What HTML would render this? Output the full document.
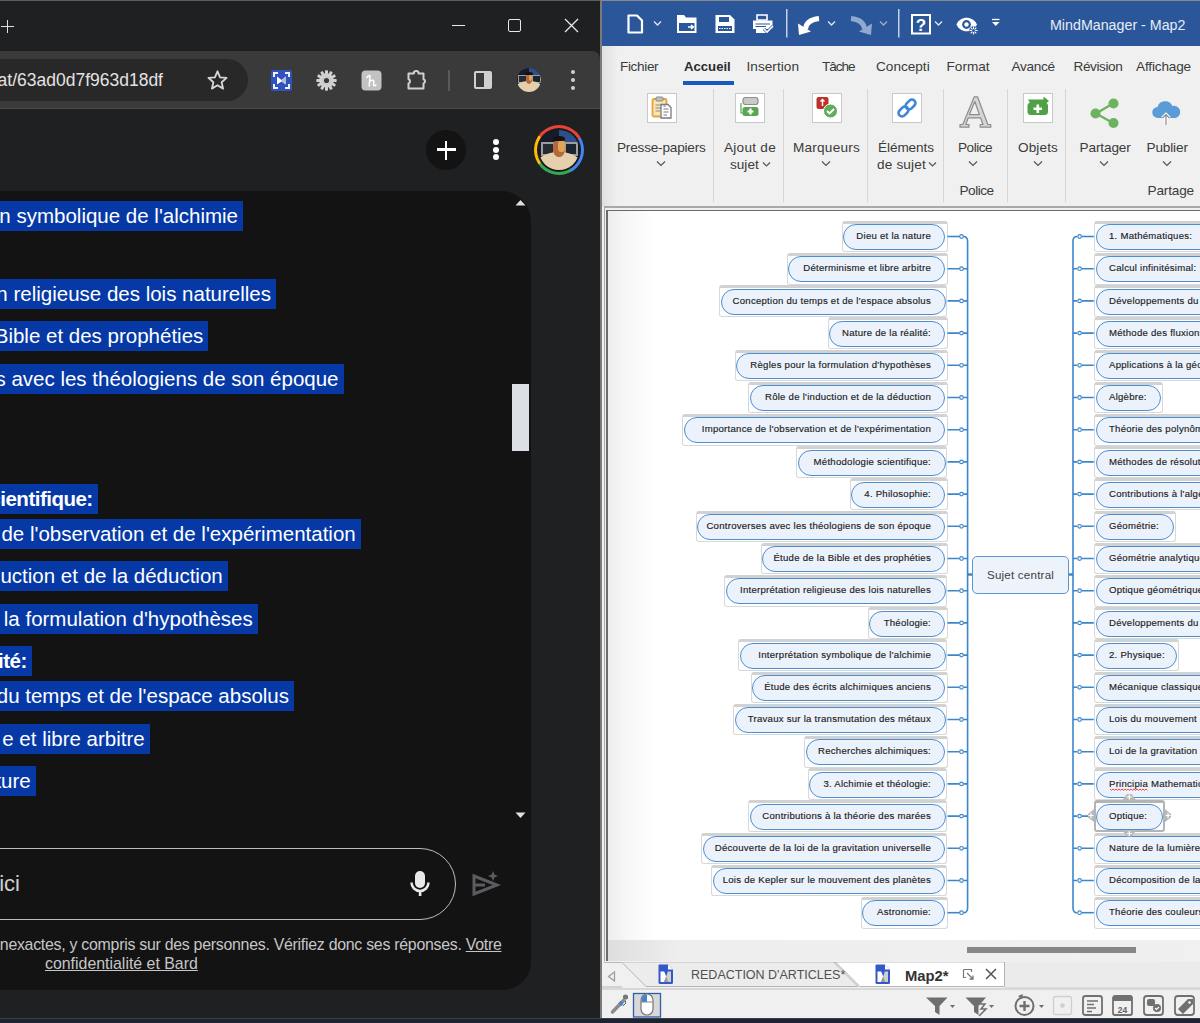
<!DOCTYPE html>
<html><head><meta charset="utf-8">
<style>
*{margin:0;padding:0;box-sizing:border-box}
html,body{width:1200px;height:1023px;overflow:hidden;background:#1c2130;font-family:"Liberation Sans",sans-serif}
.abs{position:absolute}
#chrome{position:absolute;left:0;top:0;width:600px;height:1019px;background:#1f2022;overflow:hidden}
#ctitle{position:absolute;left:0;top:0;width:600px;height:51px;background:#1f2022;border-top:1px solid #5a5b5e}
#ctool{position:absolute;left:0;top:51px;width:600px;height:58px;background:#3a3a3b;border-bottom:1px solid #4a4a4c;border-top-right-radius:8px}
#omni{position:absolute;left:-40px;top:8px;width:288px;height:42px;background:#282828;border-radius:21px}
#url{position:absolute;right:437px;top:19px;font-size:17.5px;color:#e3e3e3;white-space:nowrap;line-height:20px}
#content{position:absolute;left:0;top:110px;width:600px;height:909px;background:#1f2022}
#card{position:absolute;left:-30px;top:191px;width:561px;height:799px;background:#131314;border-radius:0 30px 28px 0;overflow:hidden}
.hl{position:absolute;height:30px;line-height:30px;background:#0639a6;color:#fff;font-size:20.5px;white-space:nowrap;padding-right:5px}
.hl.b{font-weight:bold;letter-spacing:-0.5px}
#mm{position:absolute;left:600px;top:0;width:600px;height:1019px;background:#f0f0f0;border-left:2px solid #7a7a7a;border-top:1px solid #8a8a8a;overflow:hidden}
#mtitle{position:absolute;left:0;top:0;width:600px;height:45px;background:#2b579a}
#ribbon{position:absolute;left:0;top:45px;width:600px;height:161px;background:#f0f0f0}
.tab{position:absolute;top:14px;font-size:14px;color:#3b3b3b;white-space:nowrap}
.rl{position:absolute;font-size:14px;color:#3b3b3b;white-space:nowrap;line-height:16px;text-align:center}
.sep{position:absolute;top:43px;width:1px;height:113px;background:#d5d5d5}
.ibox{position:absolute;top:48px;width:30px;height:30px;background:#fff;border:1px solid #c8c8c8}
.chev{position:absolute;width:8px;height:5px}
#canvas{position:absolute;left:6px;top:209px;width:600px;height:751px;background:#fff;border-left:2px solid #6a6a6a;border-top:2px solid #6a6a6a}
.gb{position:absolute;height:31.5px;border:1.8px solid #d8d8d8;border-top:3px solid #d2d2d2;border-radius:3px;background:#fff}
.gb.sel{border:2.2px solid #b4b4b4;border-top:3px solid #b4b4b4}
.pill{position:absolute;height:26px;border:1px solid #4b8fd3;border-radius:13px;background:#ebf2fb;font-size:9.6px;letter-spacing:0.25px;color:#1c1c1c;-webkit-text-stroke:0.15px #1c1c1c;line-height:22px;white-space:nowrap;overflow:hidden}
.tl{position:absolute;right:13.5px;top:0}
.tr{position:absolute;left:12.5px;top:0}
#mapsvg{position:absolute;left:0;top:0}
#mapsvg > path{fill:none;stroke:#3c86ca;stroke-width:1.6}
#mapsvg > circle{fill:#fff;stroke:#3c86ca;stroke-width:1.2}
</style></head><body>

<div id="chrome">
  <div id="ctitle">
    <div class="abs" style="left:1px;top:19px;width:13px;height:13px">
      <div class="abs" style="left:0;top:5.7px;width:13px;height:1.7px;background:#e0e0e0"></div>
      <div class="abs" style="left:5.7px;top:0;width:1.7px;height:13px;background:#e0e0e0"></div>
    </div>
    <div class="abs" style="left:452px;top:24px;width:13px;height:1.2px;background:#e8e8e8"></div>
    <div class="abs" style="left:508px;top:18px;width:13px;height:13px;border:1.2px solid #e8e8e8;border-radius:2px"></div>
    <svg class="abs" style="left:564px;top:17px" width="15" height="15"><path d="M1 1 L14 14 M14 1 L1 14" stroke="#e8e8e8" stroke-width="1.3"/></svg>
  </div>
  <div id="ctool">
    <div id="omni"></div>
    <div id="url">at/63ad0d7f963d18df</div>
    <svg class="abs" style="left:206px;top:18px" width="23" height="22" viewBox="0 0 24 24"><path d="M12 2.5l2.8 6.6 7.1.6-5.4 4.7 1.6 7-6.1-3.7-6.1 3.7 1.6-7L2.1 9.7l7.1-.6z" fill="none" stroke="#d6d6d6" stroke-width="2" stroke-linejoin="round"/></svg>
    <!-- ext icons -->
    <svg class="abs" style="left:271px;top:19px" width="21" height="21" viewBox="0 0 21 21"><rect width="21" height="21" rx="2" fill="#2f52bf"/><path d="M3 7V3H7M14 3H18V7M18 14V18H14M7 18H3V14" fill="none" stroke="#f0f2fa" stroke-width="2"/><path d="M6 6.5 L10.5 10 L15 6.5 V14.5 L10.5 11.5 L6 14.5Z" fill="#fff"/><path d="M10.5 10 L15 6.5 V14.5 L10.5 11.5Z" fill="#b8bccc"/></svg>
    <svg class="abs" style="left:316px;top:19px" width="21" height="21" viewBox="0 0 21 21"><g fill="#d2d2d2"><rect x="9" y="0.3" width="3" height="4" rx="0.8" transform="rotate(0 10.5 10.5)"/><rect x="9" y="0.3" width="3" height="4" rx="0.8" transform="rotate(30 10.5 10.5)"/><rect x="9" y="0.3" width="3" height="4" rx="0.8" transform="rotate(60 10.5 10.5)"/><rect x="9" y="0.3" width="3" height="4" rx="0.8" transform="rotate(90 10.5 10.5)"/><rect x="9" y="0.3" width="3" height="4" rx="0.8" transform="rotate(120 10.5 10.5)"/><rect x="9" y="0.3" width="3" height="4" rx="0.8" transform="rotate(150 10.5 10.5)"/><rect x="9" y="0.3" width="3" height="4" rx="0.8" transform="rotate(180 10.5 10.5)"/><rect x="9" y="0.3" width="3" height="4" rx="0.8" transform="rotate(210 10.5 10.5)"/><rect x="9" y="0.3" width="3" height="4" rx="0.8" transform="rotate(240 10.5 10.5)"/><rect x="9" y="0.3" width="3" height="4" rx="0.8" transform="rotate(270 10.5 10.5)"/><rect x="9" y="0.3" width="3" height="4" rx="0.8" transform="rotate(300 10.5 10.5)"/><rect x="9" y="0.3" width="3" height="4" rx="0.8" transform="rotate(330 10.5 10.5)"/><circle cx="10.5" cy="10.5" r="7.2"/></g><circle cx="10.5" cy="10.5" r="2.6" fill="#3a3a3a"/><circle cx="10.5" cy="10.5" r="4" fill="none" stroke="#c8c8c8" stroke-width="1"/></svg>
    <svg class="abs" style="left:361px;top:19px" width="21" height="21" viewBox="0 0 21 21"><rect x="0.5" y="0.5" width="20" height="20" rx="4" fill="#c2c2c2"/><path d="M6 7.5 C7 5.5 9 5 9 6.5 L8.2 16 M8.4 12.5 C9.5 10 12.5 9.5 12.8 11.5 C13 13 12.2 14 12.8 15.3 C13.2 16 14.3 15.8 14.8 15" fill="none" stroke="#fff" stroke-width="1.5" stroke-linecap="round"/></svg>
    <svg class="abs" style="left:406px;top:19px" width="22" height="21" viewBox="0 0 22 21"><path d="M2.5 3.5 H7.8 A2.4 2.4 0 0 1 12.6 3.5 H17.5 V9.2 A2.2 2.2 0 0 1 17.5 13.4 V18.5 H2.5 V13.4 A2.2 2.2 0 0 0 2.5 9.2 Z" fill="none" stroke="#d0d0d0" stroke-width="2" stroke-linejoin="round"/></svg>
    <div class="abs" style="left:448px;top:19px;width:2px;height:21px;background:#5a5a5a"></div>
    <div class="abs" style="left:474px;top:20px;width:18px;height:18px;border:2px solid #d0d0d0;border-radius:2px"><div class="abs" style="left:8px;top:0;width:6px;height:14px;background:#d0d0d0"></div></div>
    <div class="abs" style="left:517px;top:17px;width:24px;height:24px;border-radius:50%;overflow:hidden;background:#161c2a">
      <div class="abs" style="left:50%;top:0;width:50%;height:30%;background:#2f4f8c"></div>
      <div class="abs" style="left:4%;top:30%;width:36%;height:34%;background:#262a32;border:1.2px solid #9c9c9c"></div>
      <div class="abs" style="left:62%;top:30%;width:36%;height:34%;background:#1e242e;border:1.2px solid #9c9c9c"></div>
      <div class="abs" style="left:-15%;top:56%;width:130%;height:90%;border-radius:50%;background:#e6cfac"></div>
      <div class="abs" style="left:36%;top:22%;width:28%;height:46%;border-radius:45%;background:#b5683a"></div>
      <div class="abs" style="left:48%;top:26%;width:16%;height:28%;border-radius:40%;background:#e2a455"></div>
      <div class="abs" style="left:35%;top:15%;width:30%;height:13%;border-radius:50% 50% 25% 25%;background:#121212"></div>
    </div>
    <div class="abs" style="left:571px;top:19px;width:4px;height:4px;border-radius:50%;background:#d0d0d0"></div>
    <div class="abs" style="left:571px;top:27px;width:4px;height:4px;border-radius:50%;background:#d0d0d0"></div>
    <div class="abs" style="left:571px;top:35px;width:4px;height:4px;border-radius:50%;background:#d0d0d0"></div>
  </div>
  <div id="content">
    <div class="abs" style="left:426px;top:20px;width:40px;height:40px;border-radius:50%;background:#131314"></div>
    <div class="abs" style="left:436.8px;top:38.3px;width:19px;height:2.8px;background:#fff"></div>
    <div class="abs" style="left:444.6px;top:30.5px;width:2.8px;height:19px;background:#fff"></div>
    <div class="abs" style="left:493px;top:29px;width:6px;height:6px;border-radius:50%;background:#fff"></div>
    <div class="abs" style="left:493px;top:37px;width:6px;height:6px;border-radius:50%;background:#fff"></div>
    <div class="abs" style="left:493px;top:44px;width:6px;height:6px;border-radius:50%;background:#fff"></div>
    <div class="abs" style="left:534px;top:15px;width:50px;height:50px;border-radius:50%;background:conic-gradient(from -55deg,#ea4335 0 115deg,#4285f4 115deg 205deg,#34a853 205deg 290deg,#fbbc04 290deg 360deg)"></div>
    <div class="abs" style="left:537px;top:18px;width:44px;height:44px;border-radius:50%;background:#1a1b1d"></div>
    <div class="abs" style="left:539px;top:20px;width:40px;height:40px;border-radius:50%;overflow:hidden;background:#161c2a">
      <div class="abs" style="left:50%;top:0;width:50%;height:30%;background:#2f4f8c"></div>
      <div class="abs" style="left:4%;top:30%;width:36%;height:34%;background:#262a32;border:2.0px solid #9c9c9c"></div>
      <div class="abs" style="left:62%;top:30%;width:36%;height:34%;background:#1e242e;border:2.0px solid #9c9c9c"></div>
      <div class="abs" style="left:-15%;top:56%;width:130%;height:90%;border-radius:50%;background:#e6cfac"></div>
      <div class="abs" style="left:36%;top:22%;width:28%;height:46%;border-radius:45%;background:#b5683a"></div>
      <div class="abs" style="left:48%;top:26%;width:16%;height:28%;border-radius:40%;background:#e2a455"></div>
      <div class="abs" style="left:35%;top:15%;width:30%;height:13%;border-radius:50% 50% 25% 25%;background:#121212"></div>
    </div>
  </div>
  <div id="card">
  </div>
  <div class="hl" style="top:201.0px;right:357.0px">Interprétation symbolique de l'alchimie</div>
<div class="hl" style="top:279.3px;right:324.0px">Interprétation religieuse des lois naturelles</div>
<div class="hl" style="top:321.0px;right:391.7px">Étude de la Bible et des prophéties</div>
<div class="hl" style="top:364.0px;right:256.5px">Controverses avec les théologiens de son époque</div>
<div class="hl b" style="top:484.0px;right:502.3px">Méthodologie scientifique:</div>
<div class="hl" style="top:519.3px;right:239.3px">Importance de l'observation et de l'expérimentation</div>
<div class="hl" style="top:561.3px;right:372.3px">Rôle de l'induction et de la déduction</div>
<div class="hl" style="top:604.3px;right:342.3px">Règles pour la formulation d'hypothèses</div>
<div class="hl b" style="top:646.0px;right:568.3px">Nature de la réalité:</div>
<div class="hl" style="top:681.3px;right:306.0px">Conception du temps et de l'espace absolus</div>
<div class="hl" style="top:724.3px;right:450.3px;left:-10px;text-align:right">e et libre arbitre</div>
<div class="hl" style="top:766.0px;right:564.3px;left:-10px;text-align:right">ture</div>
  <svg class="abs" style="left:515px;top:199px" width="11" height="7"><path d="M0.5 6.5 L5.5 1 L10.5 6.5Z" fill="#e0e0e0"/></svg>
  <svg class="abs" style="left:515px;top:812px" width="11" height="7"><path d="M0.5 0.5 L5.5 6 L10.5 0.5Z" fill="#e0e0e0"/></svg>
  <div class="abs" style="left:512px;top:384px;width:17px;height:67px;background:#dcdfe3"></div>
  <!-- input -->
  <div class="abs" style="left:-100px;top:848px;width:556px;height:72px;border:1.3px solid #bdbdbd;border-radius:36px"></div>
  <div class="abs" style="right:580px;top:871px;font-size:22px;color:#cfcfcf;white-space:nowrap">ici</div>
  <svg class="abs" style="left:408px;top:868px" width="24" height="30" viewBox="0 0 24 30"><rect x="7" y="3" width="10" height="17" rx="5" fill="#e8e8e8"/><path d="M3.5 14.5a8.5 8.5 0 0 0 17 0" fill="none" stroke="#e8e8e8" stroke-width="2.5"/><rect x="10.8" y="22" width="2.6" height="6" fill="#e8e8e8"/></svg>
  <svg class="abs" style="left:471px;top:868px" width="32" height="30" viewBox="0 0 32 30"><path d="M3 8 L26 17 L3 26 Z M3 17 H14" fill="none" stroke="#5a5c60" stroke-width="3" stroke-linejoin="miter"/><path d="M22 3 l1.4 3.6 3.6 1.4 -3.6 1.4 -1.4 3.6 -1.4 -3.6 -3.6 -1.4 3.6 -1.4z" fill="#5a5c60"/></svg>
  <div class="abs" style="right:98.5px;top:936px;font-size:15.9px;color:#c6c6c6;white-space:nowrap;line-height:18px;letter-spacing:-0.27px">Bard peut afficher des informations inexactes, y compris sur des personnes. Vérifiez donc ses réponses. <u>Votre</u></div>
  <div class="abs" style="left:45px;top:955px;font-size:15.9px;color:#c6c6c6;white-space:nowrap;line-height:18px"><u>confidentialité et Bard</u></div>
</div>
<div class="abs" style="left:0;top:1018px;width:600px;height:2px;background:#3a3d44"></div>

<div id="mm">
  <div id="mtitle">
    <div class="abs" style="left:448px;top:16px;font-size:14.25px;color:#e6ecf5;white-space:nowrap">MindManager - Map2</div>
  </div>
  <div id="ribbon">
    <div class="abs" style="left:0;top:0;width:16px;height:161px;background:linear-gradient(90deg,#e0e0e0,#f0f0f0)"></div>
  </div>
</div>
<div id="mmov" class="abs" style="left:0;top:0;width:1200px;height:1023px;overflow:hidden">
  <!-- quick access toolbar -->
  <svg class="abs" style="left:620px;top:8px" width="390" height="34">
    <g fill="none" stroke="#fff" stroke-width="2.2" stroke-linejoin="round">
      <path d="M8.5 7.5 H17 L22 12.5 V24.5 H8.5 Z"/>
    </g>
    <path d="M34 13.5 l3.5 3.5 3.5 -3.5" fill="none" stroke="#dfe7f3" stroke-width="1.3"/>
    <g fill="#fff">
      <path d="M57 7 H64 L66 9.5 H76.5 V25 H57 Z"/>
    </g>
    <path d="M59 15 H74.5 V23 H59Z" fill="#2b579a"/>
    <path d="M68 19 H73 M71 17 L73.5 19 L71 21" stroke="#fff" stroke-width="1.4" fill="none"/>
    <path d="M95.5 7 H110 L114.5 11.5 V25 H95.5 Z" fill="#fff"/>
    <path d="M99 9 H109 V14 H99Z M98 18 H112 V23 H98Z" fill="#2b579a"/>
    <path d="M99 20.5 H111" stroke="#fff" stroke-width="1" stroke-dasharray="1.5 1"/>
    <path d="M137 7 H147 V12 H137Z" fill="none" stroke="#fff" stroke-width="1.6"/>
    <path d="M133 12.5 H152.5 V21 H133Z" fill="#fff"/>
    <path d="M135.5 16 H150 M135.5 18.5 H146" stroke="#2b579a" stroke-width="1"/>
    <path d="M136 21 H146 V25 H136Z" fill="#fff"/>
    <path d="M144 21 l3 3 6 -6" fill="none" stroke="#2b579a" stroke-width="3"/>
    <path d="M144 21 l3 3 6 -6" fill="none" stroke="#fff" stroke-width="1.6"/>
    <rect x="166" y="1" width="1.5" height="28.5" fill="#c5d2e6"/>
    <path d="M185.5 21 C186 15 190 11.5 199 10.5" fill="none" stroke="#fff" stroke-width="5"/>
    <path d="M178 15.5 L179 27 L191 23.5Z" fill="#fff"/>
    <path d="M208 13.5 l3.5 3.5 3.5 -3.5" fill="none" stroke="#dfe7f3" stroke-width="1.3"/>
    <path d="M244.5 21 C244 15 240 11.5 231 10.5" fill="none" stroke="#8fa9d0" stroke-width="5"/>
    <path d="M252 15.5 L251 27 L239 23.5Z" fill="#8fa9d0"/>
    <path d="M260 13.5 l3.5 3.5 3.5 -3.5" fill="none" stroke="#9bb0d2" stroke-width="1.3"/>
    <rect x="278" y="1" width="1.5" height="28.5" fill="#c5d2e6"/>
    <rect x="292" y="7" width="18" height="18.5" fill="none" stroke="#fff" stroke-width="2"/>
    <text x="301" y="22.5" font-family="Liberation Sans" font-weight="bold" font-size="17" fill="#fff" text-anchor="middle">?</text>
    <path d="M315 13.5 l3.5 3.5 3.5 -3.5" fill="none" stroke="#dfe7f3" stroke-width="1.3"/>
    <path d="M336.5 16.5 C340 7.5 353 7.5 357 16.5 C353 25.5 340 25.5 336.5 16.5Z" fill="#fff"/>
    <circle cx="346.5" cy="16.5" r="4.4" fill="#2b579a"/>
    <circle cx="346.5" cy="16.5" r="2.2" fill="#fff"/>
    <circle cx="353.5" cy="22.5" r="4.2" fill="#2b579a"/>
    <path d="M353.5 18.5 V26.5 M349.5 22.5 H357.5 M350.7 19.7 L356.3 25.3 M356.3 19.7 L350.7 25.3" stroke="#fff" stroke-width="1.1"/>
    <circle cx="353.5" cy="22.5" r="1.6" fill="#2b579a"/>
    <path d="M372 11.5 H379.5" stroke="#fff" stroke-width="1.3"/>
    <path d="M372 14 H379.5 L375.75 18Z" fill="#fff"/>
  </svg>
  <!-- tabs -->
  <div class="tab" style="left:620px;top:59px;font-size:13.6px;letter-spacing:-0.36px">Fichier</div>
  <div class="tab" style="left:684px;top:59px;font-weight:bold;color:#2b2b2b;font-size:13.15px">Accueil</div>
  <div class="abs" style="left:683px;top:81px;width:51px;height:3.5px;background:#185abd"></div>
  <div class="tab" style="left:746.5px;top:59px;font-size:13.6px;letter-spacing:0.04px">Insertion</div>
  <div class="tab" style="left:822px;top:59px;font-size:13.6px;letter-spacing:-1.06px">Tâche</div>
  <div class="tab" style="left:876px;top:59px;width:54px;overflow:hidden;font-size:13.6px">Conception</div>
  <div class="tab" style="left:946.5px;top:59px;font-size:13.6px;letter-spacing:0.01px">Format</div>
  <div class="tab" style="left:1011.5px;top:59px;font-size:13.6px;letter-spacing:-0.33px">Avancé</div>
  <div class="tab" style="left:1073.5px;top:59px;font-size:13.6px;letter-spacing:-0.40px">Révision</div>
  <div class="tab" style="left:1136px;top:59px;font-size:13.6px;letter-spacing:-0.16px">Affichage</div>
  <!-- separators -->
  <div class="sep" style="left:713px;top:89px"></div>
  <div class="sep" style="left:783px;top:89px"></div>
  <div class="sep" style="left:867px;top:89px"></div>
  <div class="sep" style="left:943px;top:89px"></div>
  <div class="sep" style="left:1007px;top:89px"></div>
  <div class="sep" style="left:1065px;top:89px"></div>
  <!-- icon boxes -->
  <div class="ibox" style="left:647px;top:93px"></div>
  <div class="ibox" style="left:735px;top:93px"></div>
  <div class="ibox" style="left:812px;top:93px"></div>
  <div class="ibox" style="left:892px;top:93px"></div>
  <div class="ibox" style="left:1023px;top:93px"></div>
  <svg class="abs" style="left:647px;top:93px" width="30" height="30">
    <rect x="5.5" y="6" width="14" height="17.5" rx="1.5" fill="#fbe3b5" stroke="#e3a43a" stroke-width="1.8"/>
    <rect x="9" y="4" width="7" height="4" rx="1" fill="#bdbdbd" stroke="#8a8a8a" stroke-width="1"/>
    <path d="M8.5 12H15M8.5 15H15M8.5 18H13" stroke="#8a8a8a" stroke-width="1.2"/>
    <path d="M14 11.5H21L24 14.5V25H14Z" fill="#fff" stroke="#7a7a7a" stroke-width="1.3"/>
    <path d="M16.5 16H21.5M16.5 19H21.5M16.5 22H20" stroke="#7a7a7a" stroke-width="1.1"/>
    <path d="M16.5 13.2H18.5" stroke="#4a8fd3" stroke-width="1.2"/>
  </svg>
  <svg class="abs" style="left:735px;top:93px" width="30" height="30">
    <rect x="8" y="4.5" width="15" height="7" rx="2.5" fill="#c9c9c9" stroke="#8e8e8e" stroke-width="1.2"/>
    <path d="M6 10V20H8" fill="none" stroke="#5aa552" stroke-width="1.2"/>
    <rect x="7.5" y="14" width="16" height="9" rx="2.5" fill="#5aa552"/>
    <path d="M15.5 15.5V21.5M12.5 18.5H18.5" stroke="#fff" stroke-width="2.2"/>
  </svg>
  <svg class="abs" style="left:812px;top:93px" width="30" height="30">
    <rect x="4.5" y="4" width="12" height="12" rx="2" fill="#c0302a"/>
    <path d="M10.5 6.5V13M8.5 8.5L10.5 6.5 12.5 8.5" stroke="#fff" stroke-width="1.4" fill="none"/>
    <circle cx="18.5" cy="18" r="7" fill="#62ad5b" stroke="#fff" stroke-width="1"/>
    <path d="M15 18l2.5 2.5 4.5-4.5" stroke="#fff" stroke-width="1.8" fill="none"/>
  </svg>
  <svg class="abs" style="left:892px;top:93px" width="30" height="30">
    <g fill="none" stroke="#3f86d6" stroke-width="2.6" transform="rotate(-45 15 15)">
      <rect x="4.5" y="11.5" width="11" height="7" rx="3.5"/>
      <rect x="14.5" y="11.5" width="11" height="7" rx="3.5"/>
    </g>
  </svg>
  <svg class="abs" style="left:958px;top:95px" width="36" height="34">
    <path fill-rule="evenodd" d="M16.3 1.8 H19.5 L29.8 29.5 H32.8 V32.2 H22.2 V29.5 H25 L22.6 22.8 H10.2 L7.8 29.5 H11 V32.2 H2 V29.5 H4.8 Z M11.4 19.6 H21.4 L16.8 6.5 Z" fill="#d6d6d6" stroke="#8c8c8c" stroke-width="1.2" stroke-linejoin="round"/>
  </svg>
  <svg class="abs" style="left:1023px;top:93px" width="30" height="30">
    <path d="M5 6.5 H20.5 V3.5 L26 8 L20.5 12.5 V10 H7 Z" fill="#4fa046"/>
    <rect x="4.5" y="9.5" width="20.5" height="12.5" rx="3.5" fill="#4fa046"/>
    <path d="M14.8 11.5V20 M10.5 15.8H19" stroke="#fff" stroke-width="2.6"/>
  </svg>
  <svg class="abs" style="left:1088px;top:98px" width="34" height="33">
    <path d="M8 15.5 L25 5.5 M8 15.5 L25 25" stroke="#6cb35f" stroke-width="2.4"/>
    <circle cx="7.5" cy="15.5" r="5" fill="#6cb35f"/>
    <circle cx="25.5" cy="5.5" r="5" fill="#6cb35f"/>
    <circle cx="25.5" cy="25" r="5" fill="#6cb35f"/>
  </svg>
  <svg class="abs" style="left:1150px;top:98px" width="32" height="32">
    <path d="M8 20 a5.5 5.5 0 0 1 -0.5 -11 a8 8 0 0 1 15 -1 a6 6 0 0 1 3 12 Z" fill="#5b9bd8"/>
    <path d="M16 27 V17 M12.5 20 L16 16.5 19.5 20" stroke="#fff" stroke-width="3.2" fill="none"/>
    <path d="M16 27 V17 M12.5 20 L16 16.5 19.5 20" stroke="#8a8a8a" stroke-width="1.2" fill="none"/>
  </svg>
  <!-- labels -->
  <div class="rl" style="left:617px;top:139.5px;font-size:13.6px;letter-spacing:-0.20px">Presse-papiers</div>
  <div class="rl" style="left:724px;top:139.5px;font-size:13.6px;letter-spacing:0.26px">Ajout de</div>
  <div class="rl" style="left:730px;top:156.5px;font-size:13.6px;letter-spacing:0px">sujet</div>
  <div class="rl" style="left:793px;top:139.5px;font-size:13.6px;letter-spacing:0.22px">Marqueurs</div>
  <div class="rl" style="left:878px;top:139.5px;font-size:13.6px;letter-spacing:-0.09px">Éléments</div>
  <div class="rl" style="left:877px;top:156.5px;font-size:13.6px;letter-spacing:0.17px">de sujet</div>
  <div class="rl" style="left:958px;top:139.5px;font-size:13.6px;letter-spacing:-0.50px">Police</div>
  <div class="rl" style="left:1018px;top:139.5px;font-size:13.6px;letter-spacing:0.11px">Objets</div>
  <div class="rl" style="left:1079.5px;top:139.5px;font-size:13.6px;letter-spacing:-0.12px">Partager</div>
  <div class="rl" style="left:1146.5px;top:139.5px;font-size:13.6px;letter-spacing:-0.15px">Publier</div>
  <div class="rl" style="left:959.5px;top:182.5px;font-size:13.6px;letter-spacing:-0.50px">Police</div>
  <div class="rl" style="left:1147.5px;top:182.5px;font-size:13.6px;letter-spacing:-0.16px">Partage</div>
  <svg class="abs" style="left:600px;top:155px" width="600" height="15">
    <g fill="none" stroke="#555" stroke-width="1.2">
      <path d="M57 6.5 l4 4 4 -4"/>
      <path d="M163 7.5 l3.5 3.5 3.5 -3.5"/>
      <path d="M222 6.5 l4 4 4 -4"/>
      <path d="M329 7.5 l3.5 3.5 3.5 -3.5"/>
      <path d="M369 6.5 l4 4 4 -4"/>
      <path d="M434 6.5 l4 4 4 -4"/>
      <path d="M500 6.5 l4 4 4 -4"/>
      <path d="M563 6.5 l4 4 4 -4"/>
    </g>
  </svg>
  <!-- ribbon bottom border -->
  <div class="abs" style="left:604px;top:206px;width:596px;height:2px;background:#a8a8a8"></div>
  <div class="abs" style="left:605px;top:208px;width:595px;height:1.5px;background:#e8e8e8"></div>
</div>
<div class="abs" style="left:604px;top:208px;width:596px;height:754px;background:#f0f0f0">
  <div class="abs" style="left:0;top:0;width:1.2px;height:753px;background:#a8a8a8"></div>
  <div class="abs" style="left:2px;top:1.5px;width:594px;height:751px;border-left:2px solid #6a6a6a;border-top:1.5px solid #6a6a6a;background:#fff"></div>
  <div class="abs" style="left:4px;top:3px;width:46px;height:729px;background:linear-gradient(90deg,#ededed,#f7f7f7 40%,#fff)"></div>
  <div class="abs" style="left:4px;top:732px;width:592px;height:21px;background:linear-gradient(90deg,#dedede,#eeeeee 12%,#f0f0f0)"></div>
</div>
<div class="abs" style="left:608px;top:211px;width:592px;height:729px;overflow:hidden">
  <div class="abs" style="left:-608px;top:-211px;width:1200px;height:1023px">
<div class="gb" style="left:841.5px;top:220.8px;width:106.0px"></div>
<div class="pill" style="left:843.2px;top:224.2px;width:102.3px"><span class="tl">Dieu et la nature</span></div>
<div class="gb" style="left:786.5px;top:253.0px;width:161.0px"></div>
<div class="pill" style="left:788.2px;top:256.4px;width:157.3px"><span class="tl">Déterminisme et libre arbitre</span></div>
<div class="gb" style="left:719.3px;top:285.2px;width:228.2px"></div>
<div class="pill" style="left:721.0px;top:288.6px;width:224.5px"><span class="tl">Conception du temps et de l'espace absolus</span></div>
<div class="gb" style="left:827.5px;top:317.4px;width:120.0px"></div>
<div class="pill" style="left:829.2px;top:320.8px;width:116.3px"><span class="tl">Nature de la réalité:</span></div>
<div class="gb" style="left:734.5px;top:349.6px;width:213.0px"></div>
<div class="pill" style="left:736.2px;top:353.0px;width:209.3px"><span class="tl">Règles pour la formulation d'hypothèses</span></div>
<div class="gb" style="left:748.0px;top:381.8px;width:199.5px"></div>
<div class="pill" style="left:749.7px;top:385.2px;width:195.8px"><span class="tl">Rôle de l'induction et de la déduction</span></div>
<div class="gb" style="left:682.0px;top:414.0px;width:265.5px"></div>
<div class="pill" style="left:683.7px;top:417.4px;width:261.8px"><span class="tl">Importance de l'observation et de l'expérimentation</span></div>
<div class="gb" style="left:795.8px;top:446.2px;width:151.7px"></div>
<div class="pill" style="left:797.5px;top:449.6px;width:148.0px"><span class="tl">Méthodologie scientifique:</span></div>
<div class="gb" style="left:849.5px;top:478.4px;width:98.0px"></div>
<div class="pill" style="left:851.2px;top:481.8px;width:94.3px"><span class="tl">4. Philosophie:</span></div>
<div class="gb" style="left:695.5px;top:510.6px;width:252.0px"></div>
<div class="pill" style="left:697.2px;top:514.0px;width:248.3px"><span class="tl">Controverses avec les théologiens de son époque</span></div>
<div class="gb" style="left:760.5px;top:542.8px;width:187.0px"></div>
<div class="pill" style="left:762.2px;top:546.2px;width:183.3px"><span class="tl">Étude de la Bible et des prophéties</span></div>
<div class="gb" style="left:724.3px;top:575.0px;width:223.2px"></div>
<div class="pill" style="left:726.0px;top:578.4px;width:219.5px"><span class="tl">Interprétation religieuse des lois naturelles</span></div>
<div class="gb" style="left:867.5px;top:607.2px;width:80.0px"></div>
<div class="pill" style="left:869.2px;top:610.6px;width:76.3px"><span class="tl">Théologie:</span></div>
<div class="gb" style="left:738.3px;top:639.4px;width:209.2px"></div>
<div class="pill" style="left:740.0px;top:642.8px;width:205.5px"><span class="tl">Interprétation symbolique de l'alchimie</span></div>
<div class="gb" style="left:750.5px;top:671.6px;width:197.0px"></div>
<div class="pill" style="left:752.2px;top:675.0px;width:193.3px"><span class="tl">Étude des écrits alchimiques anciens</span></div>
<div class="gb" style="left:733.3px;top:703.8px;width:214.2px"></div>
<div class="pill" style="left:735.0px;top:707.2px;width:210.5px"><span class="tl">Travaux sur la transmutation des métaux</span></div>
<div class="gb" style="left:804.0px;top:736.0px;width:143.5px"></div>
<div class="pill" style="left:805.7px;top:739.4px;width:139.8px"><span class="tl">Recherches alchimiques:</span></div>
<div class="gb" style="left:807.7px;top:768.2px;width:139.8px"></div>
<div class="pill" style="left:809.4px;top:771.6px;width:136.1px"><span class="tl">3. Alchimie et théologie:</span></div>
<div class="gb" style="left:747.8px;top:800.4px;width:199.7px"></div>
<div class="pill" style="left:749.5px;top:803.8px;width:196.0px"><span class="tl">Contributions à la théorie des marées</span></div>
<div class="gb" style="left:701.1px;top:832.6px;width:246.4px"></div>
<div class="pill" style="left:702.8px;top:836.0px;width:242.7px"><span class="tl">Découverte de la loi de la gravitation universelle</span></div>
<div class="gb" style="left:710.9px;top:864.8px;width:236.6px"></div>
<div class="pill" style="left:712.6px;top:868.2px;width:232.9px"><span class="tl">Lois de Kepler sur le mouvement des planètes</span></div>
<div class="gb" style="left:860.5px;top:897.0px;width:87.0px"></div>
<div class="pill" style="left:862.2px;top:900.4px;width:83.3px"><span class="tl">Astronomie:</span></div>
<div class="gb" style="left:1093.8px;top:220.8px;width:166.2px"></div>
<div class="pill pr" style="left:1095.5px;top:224.2px;width:162.5px"><span class="tr">1. Mathématiques:</span></div>
<div class="gb" style="left:1093.8px;top:253.0px;width:166.2px"></div>
<div class="pill pr" style="left:1095.5px;top:256.4px;width:162.5px"><span class="tr">Calcul infinitésimal:</span></div>
<div class="gb" style="left:1093.8px;top:285.2px;width:166.2px"></div>
<div class="pill pr" style="left:1095.5px;top:288.6px;width:162.5px"><span class="tr">Développements du calcul différentiel</span></div>
<div class="gb" style="left:1093.8px;top:317.4px;width:166.2px"></div>
<div class="pill pr" style="left:1095.5px;top:320.8px;width:162.5px"><span class="tr">Méthode des fluxions</span></div>
<div class="gb" style="left:1093.8px;top:349.6px;width:166.2px"></div>
<div class="pill pr" style="left:1095.5px;top:353.0px;width:162.5px"><span class="tr">Applications à la géométrie</span></div>
<div class="gb" style="left:1093.8px;top:381.8px;width:69.2px"></div>
<div class="pill pr" style="left:1095.5px;top:385.2px;width:65.5px"><span class="tr">Algèbre:</span></div>
<div class="gb" style="left:1093.8px;top:414.0px;width:166.2px"></div>
<div class="pill pr" style="left:1095.5px;top:417.4px;width:162.5px"><span class="tr">Théorie des polynômes</span></div>
<div class="gb" style="left:1093.8px;top:446.2px;width:166.2px"></div>
<div class="pill pr" style="left:1095.5px;top:449.6px;width:162.5px"><span class="tr">Méthodes de résolution des équations</span></div>
<div class="gb" style="left:1093.8px;top:478.4px;width:166.2px"></div>
<div class="pill pr" style="left:1095.5px;top:481.8px;width:162.5px"><span class="tr">Contributions à l'algèbre</span></div>
<div class="gb" style="left:1093.8px;top:510.6px;width:81.9px"></div>
<div class="pill pr" style="left:1095.5px;top:514.0px;width:78.2px"><span class="tr">Géométrie:</span></div>
<div class="gb" style="left:1093.8px;top:542.8px;width:166.2px"></div>
<div class="pill pr" style="left:1095.5px;top:546.2px;width:162.5px"><span class="tr">Géométrie analytique</span></div>
<div class="gb" style="left:1093.8px;top:575.0px;width:166.2px"></div>
<div class="pill pr" style="left:1095.5px;top:578.4px;width:162.5px"><span class="tr">Optique géométrique</span></div>
<div class="gb" style="left:1093.8px;top:607.2px;width:166.2px"></div>
<div class="pill pr" style="left:1095.5px;top:610.6px;width:162.5px"><span class="tr">Développements du calcul intégral</span></div>
<div class="gb" style="left:1093.8px;top:639.4px;width:85.2px"></div>
<div class="pill pr" style="left:1095.5px;top:642.8px;width:81.5px"><span class="tr">2. Physique:</span></div>
<div class="gb" style="left:1093.8px;top:671.6px;width:166.2px"></div>
<div class="pill pr" style="left:1095.5px;top:675.0px;width:162.5px"><span class="tr">Mécanique classique</span></div>
<div class="gb" style="left:1093.8px;top:703.8px;width:166.2px"></div>
<div class="pill pr" style="left:1095.5px;top:707.2px;width:162.5px"><span class="tr">Lois du mouvement</span></div>
<div class="gb" style="left:1093.8px;top:736.0px;width:166.2px"></div>
<div class="pill pr" style="left:1095.5px;top:739.4px;width:162.5px"><span class="tr">Loi de la gravitation universelle</span></div>
<div class="gb" style="left:1093.8px;top:768.2px;width:166.2px"></div>
<div class="pill pr" style="left:1095.5px;top:771.6px;width:162.5px"><span class="tr">Principia Mathematica</span></div>
<div class="gb sel" style="left:1093.8px;top:800.4px;width:71.2px"></div>
<div class="pill pr" style="left:1095.5px;top:803.8px;width:67.5px"><span class="tr">Optique:</span></div>
<div class="gb" style="left:1093.8px;top:832.6px;width:166.2px"></div>
<div class="pill pr" style="left:1095.5px;top:836.0px;width:162.5px"><span class="tr">Nature de la lumière</span></div>
<div class="gb" style="left:1093.8px;top:864.8px;width:166.2px"></div>
<div class="pill pr" style="left:1095.5px;top:868.2px;width:162.5px"><span class="tr">Décomposition de la lumière</span></div>
<div class="gb" style="left:1093.8px;top:897.0px;width:166.2px"></div>
<div class="pill pr" style="left:1095.5px;top:900.4px;width:162.5px"><span class="tr">Théorie des couleurs</span></div>
<div class="abs" style="left:971.8px;top:555.8px;width:97.5px;height:38px;border:1.8px solid #5a96d2;border-radius:5px;background:#edf3fa;font-size:11.6px;letter-spacing:0.2px;color:#404040;text-align:center;line-height:35px">Sujet central</div>
  <svg id="mapsvg" width="1200" height="1023">
<path d="M947.5 236.5 H959.5" />
<circle cx="961.5" cy="236.5" r="1.8" />
<path d="M947.5 268.7 H959.5 M963.5 268.7 H967.6" />
<circle cx="961.5" cy="268.7" r="1.8" />
<path d="M947.5 300.9 H959.5 M963.5 300.9 H967.6" />
<circle cx="961.5" cy="300.9" r="1.8" />
<path d="M947.5 333.1 H959.5 M963.5 333.1 H967.6" />
<circle cx="961.5" cy="333.1" r="1.8" />
<path d="M947.5 365.3 H959.5 M963.5 365.3 H967.6" />
<circle cx="961.5" cy="365.3" r="1.8" />
<path d="M947.5 397.5 H959.5 M963.5 397.5 H967.6" />
<circle cx="961.5" cy="397.5" r="1.8" />
<path d="M947.5 429.7 H959.5 M963.5 429.7 H967.6" />
<circle cx="961.5" cy="429.7" r="1.8" />
<path d="M947.5 461.9 H959.5 M963.5 461.9 H967.6" />
<circle cx="961.5" cy="461.9" r="1.8" />
<path d="M947.5 494.1 H959.5 M963.5 494.1 H967.6" />
<circle cx="961.5" cy="494.1" r="1.8" />
<path d="M947.5 526.3 H959.5 M963.5 526.3 H967.6" />
<circle cx="961.5" cy="526.3" r="1.8" />
<path d="M947.5 558.5 H959.5 M963.5 558.5 H967.6" />
<circle cx="961.5" cy="558.5" r="1.8" />
<path d="M947.5 590.7 H959.5 M963.5 590.7 H967.6" />
<circle cx="961.5" cy="590.7" r="1.8" />
<path d="M947.5 622.9 H959.5 M963.5 622.9 H967.6" />
<circle cx="961.5" cy="622.9" r="1.8" />
<path d="M947.5 655.1 H959.5 M963.5 655.1 H967.6" />
<circle cx="961.5" cy="655.1" r="1.8" />
<path d="M947.5 687.3 H959.5 M963.5 687.3 H967.6" />
<circle cx="961.5" cy="687.3" r="1.8" />
<path d="M947.5 719.5 H959.5 M963.5 719.5 H967.6" />
<circle cx="961.5" cy="719.5" r="1.8" />
<path d="M947.5 751.7 H959.5 M963.5 751.7 H967.6" />
<circle cx="961.5" cy="751.7" r="1.8" />
<path d="M947.5 783.9 H959.5 M963.5 783.9 H967.6" />
<circle cx="961.5" cy="783.9" r="1.8" />
<path d="M947.5 816.1 H959.5 M963.5 816.1 H967.6" />
<circle cx="961.5" cy="816.1" r="1.8" />
<path d="M947.5 848.3 H959.5 M963.5 848.3 H967.6" />
<circle cx="961.5" cy="848.3" r="1.8" />
<path d="M947.5 880.5 H959.5 M963.5 880.5 H967.6" />
<circle cx="961.5" cy="880.5" r="1.8" />
<path d="M947.5 912.7 H959.5" />
<circle cx="961.5" cy="912.7" r="1.8" />
<path d="M1093.8 236.5 H1082" />
<circle cx="1079.6" cy="236.5" r="1.8" />
<path d="M1093.8 268.7 H1082 M1077 268.7 H1073" />
<circle cx="1079.6" cy="268.7" r="1.8" />
<path d="M1093.8 300.9 H1082 M1077 300.9 H1073" />
<circle cx="1079.6" cy="300.9" r="1.8" />
<path d="M1093.8 333.1 H1082 M1077 333.1 H1073" />
<circle cx="1079.6" cy="333.1" r="1.8" />
<path d="M1093.8 365.3 H1082 M1077 365.3 H1073" />
<circle cx="1079.6" cy="365.3" r="1.8" />
<path d="M1093.8 397.5 H1082 M1077 397.5 H1073" />
<circle cx="1079.6" cy="397.5" r="1.8" />
<path d="M1093.8 429.7 H1082 M1077 429.7 H1073" />
<circle cx="1079.6" cy="429.7" r="1.8" />
<path d="M1093.8 461.9 H1082 M1077 461.9 H1073" />
<circle cx="1079.6" cy="461.9" r="1.8" />
<path d="M1093.8 494.1 H1082 M1077 494.1 H1073" />
<circle cx="1079.6" cy="494.1" r="1.8" />
<path d="M1093.8 526.3 H1082 M1077 526.3 H1073" />
<circle cx="1079.6" cy="526.3" r="1.8" />
<path d="M1093.8 558.5 H1082 M1077 558.5 H1073" />
<circle cx="1079.6" cy="558.5" r="1.8" />
<path d="M1093.8 590.7 H1082 M1077 590.7 H1073" />
<circle cx="1079.6" cy="590.7" r="1.8" />
<path d="M1093.8 622.9 H1082 M1077 622.9 H1073" />
<circle cx="1079.6" cy="622.9" r="1.8" />
<path d="M1093.8 655.1 H1082 M1077 655.1 H1073" />
<circle cx="1079.6" cy="655.1" r="1.8" />
<path d="M1093.8 687.3 H1082 M1077 687.3 H1073" />
<circle cx="1079.6" cy="687.3" r="1.8" />
<path d="M1093.8 719.5 H1082 M1077 719.5 H1073" />
<circle cx="1079.6" cy="719.5" r="1.8" />
<path d="M1093.8 751.7 H1082 M1077 751.7 H1073" />
<circle cx="1079.6" cy="751.7" r="1.8" />
<path d="M1093.8 783.9 H1082 M1077 783.9 H1073" />
<circle cx="1079.6" cy="783.9" r="1.8" />
<path d="M1093.8 816.1 H1082 M1077 816.1 H1073" />
<circle cx="1079.6" cy="816.1" r="1.8" />
<path d="M1093.8 848.3 H1082 M1077 848.3 H1073" />
<circle cx="1079.6" cy="848.3" r="1.8" />
<path d="M1093.8 880.5 H1082 M1077 880.5 H1073" />
<circle cx="1079.6" cy="880.5" r="1.8" />
<path d="M1093.8 912.7 H1082" />
<circle cx="1079.6" cy="912.7" r="1.8" />
<path d="M963.5 236.5 Q967.6 236.5 967.6 241.5 V907.7 Q967.6 912.7 963.5 912.7" />
<path d="M1077 236.5 Q1073 236.5 1073 241.5 V907.7 Q1073 912.7 1077 912.7" />
<path d="M967.6 574.5 H972 M1069 574.5 H1073" style="stroke-width:2.6"/>
<path d="M1110 789 l1.5 1.3 l1.5 -1.3 l1.5 1.3 l1.5 -1.3 l1.5 1.3 l1.5 -1.3 l1.5 1.3 l1.5 -1.3 l1.5 1.3 l1.5 -1.3 l1.5 1.3 l1.5 -1.3 l1.5 1.3 l1.5 -1.3 l1.5 1.3 l1.5 -1.3 l1.5 1.3 l1.5 -1.3 l1.5 1.3 l1.5 -1.3 l1.5 1.3 l1.5 -1.3 l1.5 1.3 l1.5 -1.3 l1.5 1.3" style="stroke:#e8322a;stroke-width:0.9"/>
<g style="fill:#b8b8b8"><path d="M1122 800.5 L1127 794 H1131.5 L1136.5 800.5Z"/><path d="M1122 830 L1127 836.5 H1131.5 L1136.5 830Z"/><path d="M1094 809 L1088 814 V817.5 L1094 822Z"/><path d="M1165 809 L1171 814 V817.5 L1165 822Z"/></g>
<g style="stroke:#fff;stroke-width:1.2;fill:none"><path d="M1129.3 794.5 V799.5 M1126.8 797 H1131.8"/><path d="M1129.3 831 V836 M1126.8 833.5 H1131.8"/><path d="M1091 813 V818 M1088.5 815.5 H1093.5"/><path d="M1168 813 V818 M1165.5 815.5 H1170.5"/></g>
  </svg>
  </div>
</div>
<!-- bottom of mindmanager -->
<div class="abs" style="left:602px;top:962px;width:598px;height:57px;background:#f0f0f0"></div>
<div class="abs" style="left:967px;top:947px;width:169px;height:6px;background:#878787"></div>
<div class="abs" style="left:604px;top:962px;width:596px;height:1.2px;background:#b8b8b8"></div>
<svg class="abs" style="left:602px;top:961px" width="598" height="30">
  <path d="M6.5 15.5 L12.5 11 V20Z" fill="none" stroke="#9a9a9a" stroke-width="1.2"/>
  <path d="M20 1.5 L44 25.5 H256 L232 1.5" fill="#ececec" stroke="#b5b5b5" stroke-width="1"/>
  <path d="M234 1.5 L258 25.5 H402 V1.5 Z" fill="#fff"/>
  <path d="M402.5 1.5 V25.5 H258 L234 1.5" fill="none" stroke="#b5b5b5" stroke-width="1"/>
  <path d="M0 26 H20" stroke="#b5b5b5"/>
  <path d="M402.5 26 H598" stroke="#c8c8c8"/>
</svg>
<div class="abs" style="left:1005px;top:962px;width:195px;height:25px;background:#ebebeb"></div>
<svg class="abs" style="left:656px;top:963px" width="20" height="22"><path d="M3.5 1.5H12L17 6.5V19.5a1.5 1.5 0 0 1 -1.5 1.5H4a1.5 1.5 0 0 1 -1.5 -1.5V2.5a1 1 0 0 1 1 -1Z" fill="#3358c8"/><path d="M12 1.5V6.5H17Z" fill="#fff"/><path d="M4.5 8.5H8.2L10.2 13.5L8 19H4.5Z" fill="#fff"/><path d="M11.8 8.5H15V19H7.8L10.2 13.5Z" fill="#cfcfcf"/><path d="M10.2 13.5L12.3 19H8Z" fill="#9a9a9a"/></svg>
<div class="abs" style="left:691px;top:968px;font-size:12.5px;color:#505050;white-space:nowrap">REDACTION D'ARTICLES*</div>
<svg class="abs" style="left:873px;top:963px" width="20" height="22"><path d="M3.5 1.5H12L17 6.5V19.5a1.5 1.5 0 0 1 -1.5 1.5H4a1.5 1.5 0 0 1 -1.5 -1.5V2.5a1 1 0 0 1 1 -1Z" fill="#3358c8"/><path d="M12 1.5V6.5H17Z" fill="#fff"/><path d="M4.5 8.5H8.2L10.2 13.5L8 19H4.5Z" fill="#fff"/><path d="M11.8 8.5H15V19H7.8L10.2 13.5Z" fill="#cfcfcf"/><path d="M10.2 13.5L12.3 19H8Z" fill="#9a9a9a"/></svg>
<div class="abs" style="left:905px;top:967.5px;font-size:14.8px;color:#333;font-weight:bold;white-space:nowrap">Map2*</div>
<svg class="abs" style="left:962px;top:968px" width="14" height="12"><path d="M1.5 1.5H9.5V4 M1.5 1.5V9.5H4" fill="none" stroke="#777" stroke-width="1.2"/><path d="M5 5L11 11M7.5 11H11V7.5" fill="none" stroke="#777" stroke-width="1.3"/></svg>
<svg class="abs" style="left:985px;top:968px" width="12" height="12"><path d="M1 1L11 11M11 1L1 11" stroke="#555" stroke-width="1.5"/></svg>
<!-- status bar -->
<div class="abs" style="left:602px;top:988px;width:598px;height:1.5px;background:#d8d8d8"></div>
<svg class="abs" style="left:602px;top:989px" width="598" height="30">
  <path d="M10.5 23 L21.5 11.5" stroke="#8a8a8a" stroke-width="3.5" stroke-linecap="round"/>
  <path d="M17.5 13 L20.5 16" stroke="#3d85cc" stroke-width="3"/>
  <circle cx="23.5" cy="8" r="2.6" fill="#777"/>
  <path d="M24 14 l-3 3 M23.5 11.5 v3" stroke="#666" stroke-width="1"/>
  <rect x="31.5" y="4.5" width="27" height="23.5" fill="#d8d8d8" stroke="#2f5fa8" stroke-width="1.3"/>
  <path d="M39 11 a6 6 0 0 1 12 0 V20 a6 6 0 0 1 -12 0Z" fill="#fff" stroke="#777" stroke-width="1.2"/>
  <path d="M39.6 11 a5.4 5.4 0 0 1 5.4 -5.4 V13 H39.6Z" fill="#3d85cc"/>
  <path d="M39 13 H51" stroke="#888" stroke-width="1"/>
  <g fill="#6e6e6e">
    <path d="M324 8.5 H345.5 L337.5 17 V26 L333 23 V17Z"/>
    <path d="M348 16 l5 0 -2.5 3z"/>
    <path d="M363.5 8.5 H384 L376.5 17 V26 L372 23 V17Z"/>
    <path d="M387 16 l5 0 -2.5 3z"/>
    <path d="M437 16 l5 0 -2.5 3z"/>
  </g>
  <path d="M378 15 L383 15 L379 20 L384 20 L377 27" fill="none" stroke="#6e6e6e" stroke-width="1.5"/>
  <circle cx="422.5" cy="17" r="9" fill="none" stroke="#6e6e6e" stroke-width="2"/>
  <path d="M422.5 12 V22 M417.5 17 H427.5" stroke="#6e6e6e" stroke-width="2.4"/>
  <path d="M416 7 l5 -2 -1 5z" fill="#6e6e6e"/>
  <rect x="451.5" y="7.5" width="18" height="18" rx="2" fill="none" stroke="#cfcfcf" stroke-width="1.3"/>
  <circle cx="460.5" cy="16.5" r="2.3" fill="#cfcfcf"/>
  <rect x="481" y="7" width="19" height="19" rx="2.5" fill="none" stroke="#707070" stroke-width="1.8"/>
  <path d="M485 12 H496 M485 15.5 H492 M485 19 H494 M485 22.5 H490" stroke="#707070" stroke-width="1.5"/>
  <rect x="511" y="7" width="19" height="19" rx="2" fill="none" stroke="#707070" stroke-width="1.8"/>
  <rect x="511" y="7" width="19" height="5" fill="#707070"/>
  <text x="520.5" y="23.5" font-family="Liberation Sans" font-weight="bold" font-size="8.5" fill="#606060" text-anchor="middle">24</text>
  <rect x="542" y="7" width="19" height="19" rx="3" fill="none" stroke="#707070" stroke-width="1.8"/>
  <rect x="545" y="10" width="8" height="7" rx="2" fill="#707070"/>
  <circle cx="555" cy="19" r="4" fill="#707070"/>
  <path d="M553 19 l1.5 1.5 2.5 -2.5" stroke="#fff" stroke-width="1.1" fill="none"/>
  <rect x="573" y="7" width="19" height="19" rx="3" fill="none" stroke="#707070" stroke-width="1.8"/>
  <path d="M576 20 L586 10 L591 10 L591 15 L581 25Z" fill="#707070"/>
  <circle cx="587.5" cy="13.5" r="1.2" fill="#fff"/>
</svg>
<div class="abs" style="left:600px;top:1017.5px;width:600px;height:1.5px;background:#3c3f48"></div>
<div class="abs" style="left:0;top:1019px;width:1200px;height:4px;background:#1d2331"></div>
</body></html>
